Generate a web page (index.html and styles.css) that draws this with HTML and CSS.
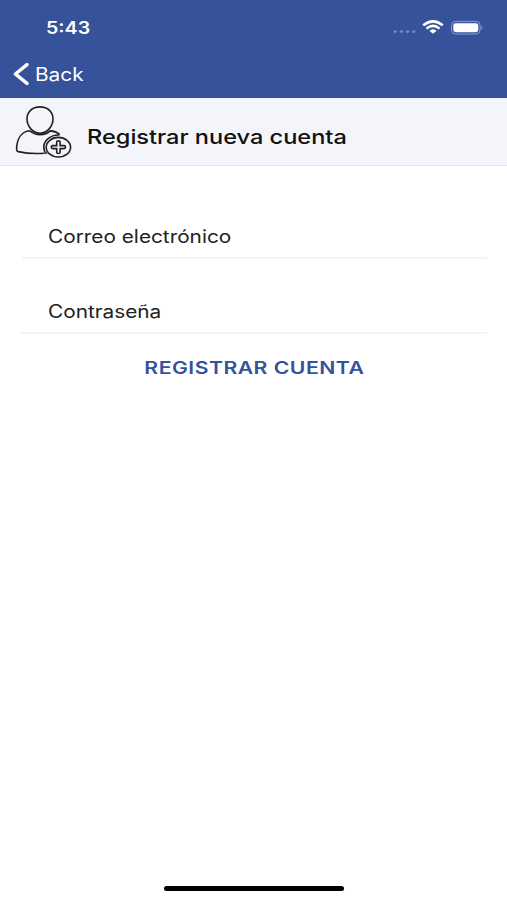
FILE: index.html
```html
<!DOCTYPE html>
<html lang="es">
<head>
    <meta charset="UTF-8">
    <meta name="viewport" content="width=device-width, initial-scale=1.0">
    <title>Registrar nueva cuenta</title>
    <link rel="stylesheet" href="styles.css">
</head>
<body>
    <div class="pantalla">
        <header class="barra">
            <div class="estado">
                <span class="hora texto">5:43</span>
                <svg class="estado-iconos" width="92" height="20" viewBox="0 0 92 20" aria-hidden="true">
                    <g fill="#7389c3">
                        <ellipse cx="4.2" cy="13.6" rx="1.8" ry="1.3"/>
                        <ellipse cx="10.4" cy="13.6" rx="1.8" ry="1.3"/>
                        <ellipse cx="16.6" cy="13.6" rx="1.8" ry="1.3"/>
                        <ellipse cx="22.8" cy="13.6" rx="1.8" ry="1.3"/>
                    </g>
                    <g fill="none" stroke="#fff" stroke-width="2.5">
                        <path d="M32.2 7.3 Q42 -0.6 51.8 7.3"/>
                        <path d="M35.4 10.6 Q42 5.2 48.6 10.6"/>
                    </g>
                    <path d="M38.4 12.7 Q42 9.6 45.6 12.7 L42 15.8 Z" fill="#fff"/>
                    <rect x="60.5" y="3.4" width="28.6" height="12.6" rx="4" fill="none" stroke="#8d9fd0" stroke-width="1"/>
                    <rect x="62.3" y="5.2" width="25" height="9" rx="2.4" fill="#fff"/>
                    <path d="M90.4 7.6 Q92.6 9.7 90.4 11.8 Z" fill="#8d9fd0"/>
                </svg>
            </div>
            <a class="volver" href="#">
                <svg width="18" height="24" viewBox="0 0 18 24" aria-hidden="true">
                    <path d="M15 2.6 L3.4 12 L15 21.4" fill="none" stroke="#fff" stroke-width="3.5" stroke-linecap="round" stroke-linejoin="round"/>
                </svg>
                <span class="volver-texto texto">Back</span>
            </a>
        </header>

        <div class="titulo">
            <svg width="58" height="54" viewBox="0 0 58 54" fill="none" stroke="#222" stroke-width="1.6" aria-hidden="true">
                <path d="M25 0.9 C33 0.9 38 6.2 38 12.8 C38 20.4 32.2 27.3 25 27.3 C17.8 27.3 12 20.4 12 12.8 C12 6.2 17 0.9 25 0.9 Z"/>
                <path d="M14.8 24.8 C7 25.6 1.7 32 1.6 43.8 Q1.6 45.3 3.2 45.6 C11 47.4 20 48 29.5 47.2 M14.8 24.8 C20 30 30 30 35.3 24.9 C39 25.1 41.8 26 44.6 28.3"/>
                <path d="M44.6 29 C35 28.6 28.8 35 28.8 41 Q28.8 45.4 31.6 47.8"/>
                <ellipse cx="43.4" cy="41.2" rx="12.2" ry="9.8"/>
                <path d="M41.7 35.8 Q41.7 34.9 43.4 34.9 Q45.1 34.9 45.1 35.8 V39.6 H49 Q50.5 39.6 50.5 41.1 Q50.5 42.6 49 42.6 H45.1 V46.5 Q45.1 47.5 43.4 47.5 Q41.7 47.5 41.7 46.5 V42.6 H37.8 Q36.3 42.6 36.3 41.1 Q36.3 39.6 37.8 39.6 H41.7 Z"/>
            </svg>
            <h1 class="titulo-texto texto">Registrar nueva cuenta</h1>
        </div>

        <form class="formulario">
            <div class="campo campo-correo"><label class="texto">Correo electrónico</label></div>
            <div class="campo campo-clave"><label class="texto">Contraseña</label></div>
            <button type="button" class="boton"><span class="boton-texto">REGISTRAR CUENTA</span></button>
        </form>

        <div class="inicio"></div>
    </div>
</body>
</html>
```
FILE: styles.css
```css
body {
    margin: 0;
    background: #fff;
    font-family: "Inter", "Liberation Sans", sans-serif;
    color: #222;
}

.pantalla {
    display: flex;
    flex-direction: column;
    height: 900px;
    overflow: hidden;
}

/* letra ancha */
.texto {
    display: inline-block;
    white-space: nowrap;
    transform: scaleX(1.155);
    transform-origin: left center;
}

.barra {
    height: 98px;
    box-sizing: border-box;
    background: #35529b;
    color: #fff;
}

.estado {
    display: flex;
    justify-content: space-between;
    align-items: center;
    height: 55px;
    padding: 0 24px 0 46px;
    box-sizing: border-box;
}

.hora {
    font-size: 17px;
    font-weight: 600;
}

.volver {
    display: flex;
    align-items: center;
    height: 38px;
    padding-left: 12px;
    gap: 5px;
    color: #fff;
    text-decoration: none;
}

.volver-texto {
    font-size: 18px;
}

.titulo {
    display: flex;
    align-items: flex-start;
    gap: 14px;
    height: 68px;
    box-sizing: border-box;
    padding: 8px 0 0 15px;
    background: #f4f5fa;
    border-bottom: 1px solid #e6e7ea;
}

.titulo-texto {
    margin: 19px 0 0;
    font-size: 20px;
    line-height: 24px;
    font-weight: 500;
    color: #111;
    transform: scaleX(1.178);
}

.formulario {
    display: flex;
    flex-direction: column;
    padding: 18px 20px 0;
}

.campo {
    height: 75px;
    box-sizing: border-box;
    padding: 41px 0 0 28px;
    border-bottom: 2px solid #f4f4f4;
}

.campo-correo {
    margin-left: 2px;
    padding-left: 26px;
}

.campo label {
    font-size: 18px;
    line-height: 24px;
}

.boton {
    align-self: center;
    margin-top: 22px;
    padding: 0 0 0 1px;
    border: none;
    background: none;
    font-family: inherit;
    font-size: 17px;
    line-height: 24px;
    font-weight: 600;
    letter-spacing: 0.4px;
    color: #35529b;
    cursor: pointer;
}

.boton-texto {
    display: inline-block;
    transform: scaleX(1.245);
}

.inicio {
    align-self: center;
    width: 180px;
    height: 5px;
    margin: auto 0 9px;
    border-radius: 3px;
    background: #000;
}
```
